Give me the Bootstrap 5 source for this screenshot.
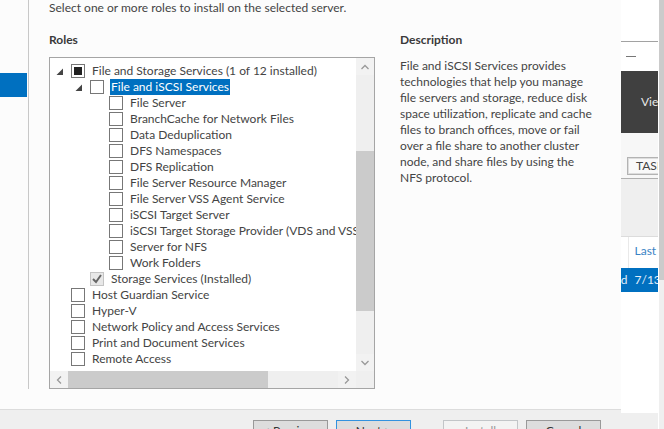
<!DOCTYPE html>
<html lang="en">
<head>
<meta charset="utf-8">
<meta name="viewport" content="width=device-width, initial-scale=1">
<title>Add Roles and Features Wizard</title>
<link rel="stylesheet" href="https://cdn.jsdelivr.net/npm/bootstrap@5.3.0/dist/css/bootstrap.min.css">
<style>
  body { font: 12px/16px Lato, "Open Sans", sans-serif; color: #444; background: #fff; }
  h2 { font-size: 12px; line-height: 16px; font-weight: 700; color: #3a3a3a; }
  .wizard { background: #fcfcfc; min-width: 0; }
  .steps { width: 29px; margin-bottom: 20px; padding-top: 73px; border-right: 1px solid #c8c8c8; }
  .step-current { height: 24px; width: 27px; background: #0070c0; }
  .page { padding: 0 20px 20px; min-width: 0; }
  .roles-col { width: 326px; }
  .roles-col h2 { margin-bottom: 9px; }
  .description-col { padding: 0 4px 0 25px; }
  .description-col h2 { margin-bottom: 10px; }
  .tree-frame { border: 1px solid #a5a5a5; background: #fff; display: grid; grid-template-columns: minmax(0, 1fr) 18px; grid-template-rows: minmax(0, 1fr) 17px; }
  .tree { padding: 5px 0 4px 6px; overflow: hidden; white-space: nowrap; }
  .tree ul { padding-left: 19px; }
  .tree-row { height: 16px; }
  .twisty { width: 15px; height: 14px; flex: none; }
  .twisty svg { display: block; margin: 4px 0 0; }
  .tree input { appearance: none; width: 14px; height: 14px; border: 1px solid #777; background: #fff; flex: none; margin-right: 6px; border-radius: 0; }
  .tree label { padding: 0 1px; line-height: 16px; }
  .tree input.partial { background: #222 content-box; padding: 2px; }
  .tree input:disabled { border-color: #c4c4c4; background: #e8e8e8 url("data:image/svg+xml,%3Csvg xmlns='http://www.w3.org/2000/svg' viewBox='0 0 12 12'%3E%3Cpath d='M2 6l3 3 5-7' fill='none' stroke='%23666' stroke-width='2'/%3E%3C/svg%3E") center / 12px no-repeat; }
  .picked { background: #0070c0; color: #fff; }
  .track { background: #efefef; }
  .track button { border: 0; padding: 0; background: #f2f2f2; width: 18px; height: 17px; display: flex; align-items: center; justify-content: center; }
  .thumb { background: #cbcbcb; }
  .v-thumb { margin-top: 76px; height: 160px; }
  .h-thumb { width: 200px; }
  .actions { background: #efefef; border-top: 1px solid #dcdcdc; height: 20px; padding: 10px 20px 0; }
  .actions .btn { --bs-btn-font-size: 12px; --bs-btn-line-height: 16px; --bs-btn-padding-x: 0px; --bs-btn-padding-y: 1px; --bs-btn-border-radius: 0; --bs-btn-color: #333; --bs-btn-bg: #ddd; --bs-btn-border-color: #999; --bs-btn-disabled-color: #999; --bs-btn-disabled-bg: #f3f3f3; --bs-btn-disabled-border-color: #c2c5c8; --bs-btn-disabled-opacity: 1; width: 75px; height: 22px; flex: none; }
  .actions .default-btn { --bs-btn-border-color: #3292df; }
  .behind { width: 37px; white-space: nowrap; overflow: hidden; }
  .caption-bar { height: 71px; }
  .caption-line { margin-top: 41px; height: 1px; background: #a2a2a2; }
  .minimize { border: 0; padding: 0; background: transparent; width: 20px; height: 29px; display: flex; align-items: center; justify-content: center; }
  .menu-bar { height: 62px; background: #404040; padding: 0 0 0 20px; }
  .menu-bar a { color: #e8e8e8; text-decoration: none; }
  .task-bar { height: 46px; background: #f7f7f7; border-bottom: 1px solid #b0b0b0; padding: 24px 0 0 6px; }
  .task-bar button { border: 1px solid #b3b3b3; outline: 1px solid #ddd; outline-offset: -2px; background: #f9f9f9; color: #444; padding: 0 8px; height: 18px; line-height: 14px; width: 64px; text-align: left; }
  .filler { height: 58px; background: #efefef; border-bottom: 1px solid #dcdcdc; }
  .grid-table { border-collapse: collapse; line-height: 16px; }
  .grid-table th { font-weight: 400; color: #3a83c5; height: 31px; padding: 0 0 4px 6px; vertical-align: middle; }
  .grid-table td { background: #0070c0; color: #e3eefa; height: 24px; padding: 0 0 0 6px; }
  .grid-table .edge { min-width: 7px; width: 7px; padding: 0; border-right: 1px solid #e9e9e9; }
  .grid-table td.edge { border-color: #0070c0; direction: rtl; max-width: 7px; overflow: hidden; }
  .status-area { background: #efefef; height: 16px; }
  .outer-track { width: 6px; background: #efefef; border-left: 1px solid #fff; }
  .outer-thumb { height: 280px; background: #cbcbcb; }
</style>
<script src="https://cdn.jsdelivr.net/npm/bootstrap@5.3.0/dist/js/bootstrap.bundle.min.js"></script>
</head>
<body>
<div class="d-flex vh-100 overflow-hidden">
  <main class="wizard d-flex flex-column flex-grow-1">
    <div class="d-flex flex-grow-1">
      <nav class="steps flex-shrink-0" aria-label="Steps"><div class="step-current"></div></nav>
      <div class="page d-flex flex-column flex-grow-1">
        <p class="mb-0">Select one or more roles to install on the selected server.</p>
        <div class="d-flex flex-grow-1 pt-3">
          <section class="roles-col d-flex flex-column flex-shrink-0">
            <h2>Roles</h2>
            <div class="tree-frame flex-grow-1">
              <div class="tree">
                <div class="tree-row d-flex align-items-center"><span class="twisty"><svg width="8" height="8" viewBox="0 0 8 8"><path d="M7 0.500v6.500H0.500z" fill="#444"/></svg></span><input type="checkbox" class="partial" id="r1"><label for="r1">File and Storage Services (1 of 12 installed)</label></div>
                <ul class="list-unstyled mb-0">
                  <li>
                    <div class="tree-row d-flex align-items-center"><span class="twisty"><svg width="8" height="8" viewBox="0 0 8 8"><path d="M7 0.500v6.500H0.500z" fill="#444"/></svg></span><input type="checkbox" id="r2"><label class="picked" for="r2">File and iSCSI Services</label></div>
                    <ul class="list-unstyled mb-0">
                      <li class="tree-row d-flex align-items-center"><span class="twisty"></span><input type="checkbox" id="r3"><label for="r3">File Server</label></li>
                      <li class="tree-row d-flex align-items-center"><span class="twisty"></span><input type="checkbox" id="r4"><label for="r4">BranchCache for Network Files</label></li>
                      <li class="tree-row d-flex align-items-center"><span class="twisty"></span><input type="checkbox" id="r5"><label for="r5">Data Deduplication</label></li>
                      <li class="tree-row d-flex align-items-center"><span class="twisty"></span><input type="checkbox" id="r6"><label for="r6">DFS Namespaces</label></li>
                      <li class="tree-row d-flex align-items-center"><span class="twisty"></span><input type="checkbox" id="r7"><label for="r7">DFS Replication</label></li>
                      <li class="tree-row d-flex align-items-center"><span class="twisty"></span><input type="checkbox" id="r8"><label for="r8">File Server Resource Manager</label></li>
                      <li class="tree-row d-flex align-items-center"><span class="twisty"></span><input type="checkbox" id="r9"><label for="r9">File Server VSS Agent Service</label></li>
                      <li class="tree-row d-flex align-items-center"><span class="twisty"></span><input type="checkbox" id="r10"><label for="r10">iSCSI Target Server</label></li>
                      <li class="tree-row d-flex align-items-center"><span class="twisty"></span><input type="checkbox" id="r11"><label for="r11">iSCSI Target Storage Provider (VDS and VSS</label></li>
                      <li class="tree-row d-flex align-items-center"><span class="twisty"></span><input type="checkbox" id="r12"><label for="r12">Server for NFS</label></li>
                      <li class="tree-row d-flex align-items-center"><span class="twisty"></span><input type="checkbox" id="r13"><label for="r13">Work Folders</label></li>
                    </ul>
                  </li>
                  <li class="tree-row d-flex align-items-center"><span class="twisty"></span><input type="checkbox" id="r14" checked disabled><label for="r14">Storage Services (Installed)</label></li>
                </ul>
                <div class="tree-row d-flex align-items-center"><span class="twisty"></span><input type="checkbox" id="r15"><label for="r15">Host Guardian Service</label></div>
                <div class="tree-row d-flex align-items-center"><span class="twisty"></span><input type="checkbox" id="r16"><label for="r16">Hyper-V</label></div>
                <div class="tree-row d-flex align-items-center"><span class="twisty"></span><input type="checkbox" id="r17"><label for="r17">Network Policy and Access Services</label></div>
                <div class="tree-row d-flex align-items-center"><span class="twisty"></span><input type="checkbox" id="r18"><label for="r18">Print and Document Services</label></div>
                <div class="tree-row d-flex align-items-center"><span class="twisty"></span><input type="checkbox" id="r19"><label for="r19">Remote Access</label></div>
              </div>
              <div class="track d-flex flex-column">
                <button type="button" aria-label="Scroll up"><svg width="8" height="6" viewBox="0 0 8 6"><path d="M0.5 5L4 1.500L7.500 5" fill="none" stroke="#999" stroke-width="1.300"/></svg></button>
                <div class="thumb v-thumb"></div>
                <button type="button" class="mt-auto" aria-label="Scroll down"><svg width="8" height="6" viewBox="0 0 8 6"><path d="M0.5 1L4 4.500L7.500 1" fill="none" stroke="#999" stroke-width="1.300"/></svg></button>
              </div>
              <div class="track d-flex">
                <button type="button" aria-label="Scroll left"><svg width="6" height="8" viewBox="0 0 6 8"><path d="M5 0.500L1.500 4L5 7.500" fill="none" stroke="#999" stroke-width="1.300"/></svg></button>
                <div class="thumb h-thumb"></div>
                <button type="button" class="ms-auto" aria-label="Scroll right"><svg width="6" height="8" viewBox="0 0 6 8"><path d="M1 0.500L4.500 4L1 7.500" fill="none" stroke="#999" stroke-width="1.300"/></svg></button>
              </div>
              <div class="track"></div>
            </div>
          </section>
          <section class="description-col flex-grow-1">
            <h2>Description</h2>
            <p class="mb-0">File and iSCSI Services provides technologies that help you manage file servers and storage, reduce disk space utilization, replicate and cache files to branch offices, move or fail over a file share to another cluster node, and share files by using the NFS protocol.</p>
          </section>
        </div>
      </div>
    </div>
    <div class="actions d-flex justify-content-end overflow-hidden flex-shrink-0">
      <button type="button" class="btn me-2">&lt; Previous</button>
      <button type="button" class="btn default-btn me-4">Next &gt;</button>
      <button type="button" class="btn ms-2 me-2" disabled>Install</button>
      <button type="button" class="btn">Cancel</button>
    </div>
  </main>
  <aside class="behind d-flex flex-column flex-shrink-0">
    <div class="caption-bar overflow-hidden flex-shrink-0">
      <div class="caption-line"></div>
      <button type="button" class="minimize" aria-label="Minimize"><svg width="10" height="1"><path d="M0 0h10v1H0z" fill="#777"/></svg></button>
    </div>
    <div class="menu-bar d-flex align-items-center flex-shrink-0"><a href="#">View</a></div>
    <div class="task-bar flex-shrink-0"><button type="button">TASKS</button></div>
    <div class="filler flex-shrink-0"></div>
    <table class="grid-table">
      <thead><tr><th class="edge"></th><th>Last</th></tr></thead>
      <tbody><tr><td class="edge">d</td><td>7/13</td></tr></tbody>
    </table>
    <div class="status-area mt-auto flex-shrink-0"></div>
  </aside>
  <div class="outer-track flex-shrink-0"><div class="outer-thumb"></div></div>
</div>
</body>
</html>
